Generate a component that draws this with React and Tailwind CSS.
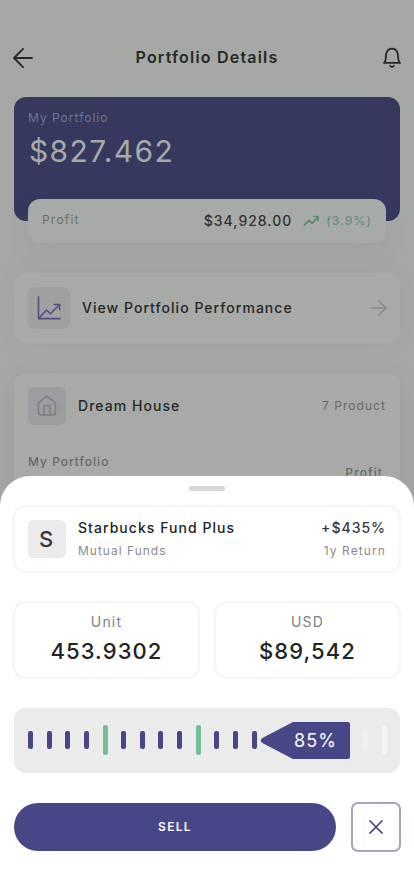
import React from 'react';

// the 5th, 10th, 15th... marks of the ruler are the tall ones
const ticks = Array.from({ length: 20 }, (_, i) => ({
  id: i,
  major: i % 5 === 4,
  active: i < 17
}));

function tickClass(tick) {
  if (!tick.active) {
    return tick.major ? 'h-[30px] bg-[#f4f4f4]' : 'h-[18px] bg-[#f1f1f1]';
  }
  return tick.major ? 'h-[30px] bg-[#74bd95]' : 'h-[18px] bg-[#474787]';
}

function ArrowLeft() {
  return (
    <svg width="20" height="20" viewBox="0 0 20 20" fill="none" stroke="#252825" strokeWidth="1.8" strokeLinecap="round" strokeLinejoin="round">
      <path d="M19 10H1M10 0.9L1 10L10 19.1" />
    </svg>
  );
}

function Bell() {
  return (
    <svg width="20" height="22" viewBox="0 0 20 22" fill="none" stroke="#252825" strokeWidth="1.8" strokeLinecap="round" strokeLinejoin="round">
      <path d="M2 15.9H18C16.4 14.8 16.3 13.2 16.1 9.8C15.9 4.6 14.2 1.7 10 1.7C5.8 1.7 4.1 4.6 3.9 9.8C3.7 13.2 3.6 14.8 2 15.9Z" />
      <path d="M8.2 19C9 20.2 11 20.2 11.8 19" />
    </svg>
  );
}

function ChartIcon() {
  return (
    <svg width="24" height="24" viewBox="0 0 24 24" fill="none" stroke="#504f7d" strokeWidth="1.6" strokeLinecap="round" strokeLinejoin="round">
      <path d="M1.5 0.9V22.6H23.2" />
      <path d="M2 22L9.5 14L13.5 17.8L22.3 8.8" />
      <path d="M17.3 8.5H22.6V13.6" />
    </svg>
  );
}

function HouseIcon() {
  return (
    <svg width="20" height="22" viewBox="0 0 20 22" fill="none" stroke="#7e7e88" strokeWidth="1.6" strokeLinecap="round" strokeLinejoin="round">
      <path d="M1.5 7.9L10 1.2L18.5 7.9V17.5C18.5 19.2 17.7 20 16 20H4C2.3 20 1.5 19.2 1.5 17.5Z" />
      <path d="M7 20V10.5H13V20" />
    </svg>
  );
}

function TrendIcon() {
  return (
    <svg width="16" height="12" viewBox="0 0 16 12" fill="none" stroke="#55886d" strokeWidth="1.5" strokeLinejoin="round">
      <path d="M0.9 10.6L6 5.4L9 8.4L14.7 2.3" />
      <path d="M10.4 1.6H15V6.2" />
    </svg>
  );
}

function ArrowRight() {
  return (
    <svg width="17" height="16" viewBox="0 0 17 16" fill="none" stroke="#888a88" strokeWidth="1.6" strokeLinecap="round" strokeLinejoin="round">
      <path d="M1.3 8H16M8.8 0.8L16 8L8.8 15.2" />
    </svg>
  );
}

function AmountBox({ label, value }) {
  return (
    <div className="flex h-[78px] flex-1 flex-col items-center rounded-[13px] border-2 border-[#f5f5f5] pt-[9px]">
      <span className="text-[14px] leading-[20px] tracking-[1.2px] text-[#808080]">{label}</span>
      <span className="mt-[5px] text-[22px] leading-[28px] font-medium tracking-[1.1px] text-[#222422]">{value}</span>
    </div>
  );
}

function SellSheet() {
  return (
    <div className="absolute inset-x-0 bottom-0 flex h-[420px] flex-col rounded-t-[30px] bg-white px-[13px] pt-[10px]">
      <div className="h-[5px] w-9 self-center rounded-full bg-[#d6d6d6]"></div>

      {/* Fund */}
      <div className="mt-[14px] flex h-[68px] items-center rounded-[13px] border-2 border-[#f5f5f5] px-[13px]">
        <div className="flex size-[38px] items-center justify-center rounded-[6px] bg-[#ebebeb] pr-[2px] text-[22px] font-medium text-[#35353a]">S</div>
        <div className="ml-3 flex flex-1 flex-col">
          <span className="text-[14px] leading-[20px] font-medium tracking-[1.05px] text-[#222422]">Starbucks Fund Plus</span>
          <span className="mt-[3px] text-[12px] leading-[20px] tracking-[1px] text-[#8a8a8a]">Mutual Funds</span>
        </div>
        <div className="flex flex-col items-end">
          <span className="text-[14px] leading-[20px] font-medium tracking-[1px] text-[#35353a]">+$435%</span>
          <span className="mt-[3px] text-[12px] leading-[20px] tracking-[1.1px] text-[#8a8a8a]">1y Return</span>
        </div>
      </div>

      <div className="mt-7 flex gap-[14px]">
        <AmountBox label="Unit" value="453.9302" />
        <AmountBox label="USD" value="$89,542" />
      </div>

      {/* Ruler */}
      <div className="relative mx-px mt-[29px] flex h-[65px] items-center justify-between rounded-[12px] bg-[#ebebeb] pr-[13px] pb-px pl-[14px]">
        {ticks.map(tick => (
          <span key={tick.id} className={`w-[5px] rounded-[2px] ${tick.id > 12 && tick.id < 18 ? 'invisible' : ''} ${tickClass(tick)}`}></span>
        ))}
        <div className="absolute top-[14px] left-[246px] h-[37px] w-[90px]">
          <svg className="absolute inset-0" width="90" height="37" viewBox="0 0 90 37" fill="#474787">
            <path d="M33 0H88Q90 0 90 2V35Q90 37 88 37H33L2.4 21Q-0.8 18.5 2.4 16Z" />
          </svg>
          <span className="absolute top-0 left-[34px] text-[18px] leading-[37px] tracking-[1.1px] text-white">85%</span>
        </div>
      </div>

      <div className="mt-[29px] flex items-center">
        <button className="ml-px h-12 w-[322px] rounded-full bg-[#474787] text-[12px] font-semibold tracking-[1.3px] text-white">SELL</button>
        <button className="ml-[15px] flex size-[50px] items-center justify-center rounded-[7px] border-2 border-[#a3a3c3]">
          <svg width="14" height="14" viewBox="0 0 14 14" fill="none" stroke="#474787" strokeWidth="1.5" strokeLinecap="round">
            <path d="M0.9 0.9L13.1 13.1M13.1 0.9L0.9 13.1" />
          </svg>
        </button>
      </div>
    </div>
  );
}

export default function App() {
  return (
    <div className="relative h-[896px] w-[414px] overflow-hidden bg-[#a5a8a4] font-['Inter',sans-serif]">
      {/* Header */}
      <div className="flex h-[97px] items-start justify-between pt-[47px] pr-3 pl-3">
        <div className="mt-px w-5 pl-px"><ArrowLeft /></div>
        <h1 className="text-[16px] leading-[20px] font-semibold tracking-[1.2px] text-[#252825]">Portfolio Details</h1>
        <div className="w-5"><Bell /></div>
      </div>

      {/* Balance */}
      <div className="mx-[14px] flex h-[124px] flex-col rounded-[12px] bg-[#36385e] px-[14px] pt-[11px]">
        <span className="text-[12px] leading-[20px] tracking-[1px] text-[#74758a]">My Portfolio</span>
        <span className="mt-[3px] ml-px text-[30px] leading-[40px] tracking-[1.35px] text-[#a8aaa8]">$827.462</span>
        <div className="mt-[28px] flex h-11 shrink-0 items-center rounded-[12px] bg-[#a8aaa7] px-[14px] pb-px shadow-[0_14px_28px_rgba(70,72,70,0.06)]">
          <span className="flex-1 pb-px text-[12px] tracking-[1.2px] text-[#6d706d]">Profit</span>
          <span className="mr-[11px] text-[14px] font-medium tracking-[1px] text-[#303330]">$34,928.00</span>
          <TrendIcon />
          <span className="ml-[7px] text-[12px] font-medium tracking-[1.1px] text-[#64917a]">(3.9%)</span>
        </div>
      </div>

      <div className="mx-[14px] mt-[52px] flex h-[70px] items-center rounded-[12px] bg-[#a8aaa7] pr-[13px] pl-[14px] shadow-[0_0_26px_rgba(70,72,70,0.06)]">
        <div className="flex size-[42px] items-center justify-center rounded-[6px] bg-[#9fa1a1]"><ChartIcon /></div>
        <span className="ml-3 flex-1 pb-px text-[14px] font-medium tracking-[1.04px] text-[#252825]">View Portfolio Performance</span>
        <ArrowRight />
      </div>

      {/* Product */}
      <div className="mx-[14px] mt-[30px] h-[200px] rounded-[12px] bg-[#a8aaa7] px-[14px] pt-[14px] shadow-[0_10px_30px_rgba(70,72,70,0.12)]">
        <div className="flex items-center">
          <div className="flex size-[38px] items-center justify-center rounded-[6px] bg-[#9b9d9e]"><HouseIcon /></div>
          <span className="ml-3 flex-1 pb-px text-[14px] font-medium tracking-[1.05px] text-[#252825]">Dream House</span>
          <span className="text-[12px] tracking-[1.05px] text-[#666966]">7 Product</span>
        </div>
        <div className="mt-[27px] flex justify-between text-[12px] leading-[20px] font-medium tracking-[1px] text-[#666966]">
          <span>My Portfolio</span>
          <span className="mt-[11px] mr-[3px] tracking-[1.1px]">Profit</span>
        </div>
      </div>

      <SellSheet />
    </div>
  );
}
